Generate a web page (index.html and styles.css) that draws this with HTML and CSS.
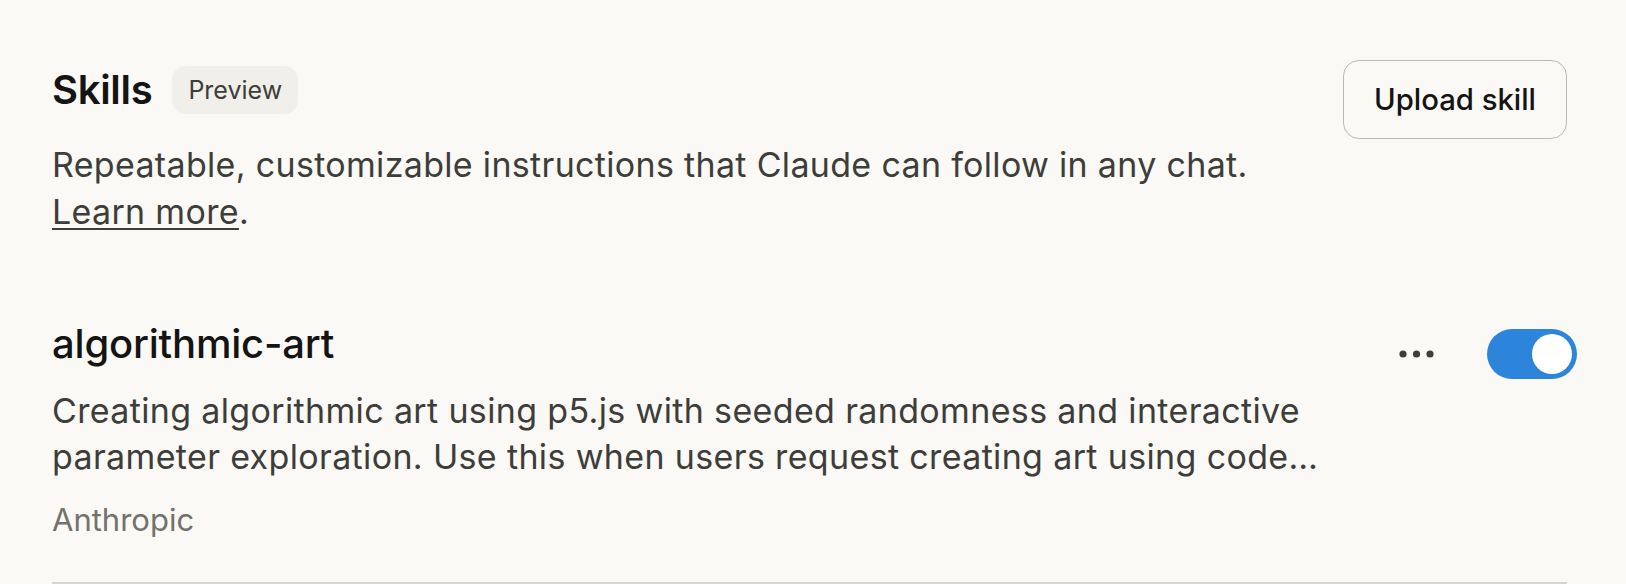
FILE: index.html
```html
<!DOCTYPE html>
<html lang="en">
<head>
<meta charset="utf-8">
<title>Skills</title>
<link rel="stylesheet" href="styles.css">
</head>
<body>
<main class="page">
  <header class="head">
    <div class="head-text">
      <div class="title-row">
        <h1 class="title">Skills</h1>
        <span class="badge">Preview</span>
      </div>
      <p class="desc">Repeatable, customizable instructions that Claude can follow in any chat.<br><a class="link" href="#">Learn more</a>.</p>
    </div>
    <button class="upload" type="button">Upload skill</button>
  </header>

  <section class="skill">
    <div class="skill-main">
      <h2 class="skill-name">algorithmic-art</h2>
      <p class="skill-desc">Creating algorithmic art using p5.js with seeded randomness and interactive<br>parameter exploration. Use this when users request creating art using code…</p>
      <p class="skill-author">Anthropic</p>
    </div>
    <div class="skill-actions">
      <button class="more" type="button" aria-label="More options">
        <svg width="36" height="8" viewBox="0 0 36 8" aria-hidden="true">
          <circle cx="4" cy="4" r="3.6"/>
          <circle cx="17.5" cy="4" r="3.6"/>
          <circle cx="31" cy="4" r="3.6"/>
        </svg>
      </button>
      <span class="toggle" role="switch" aria-checked="true"><span class="knob"></span></span>
    </div>
  </section>
</main>
</body>
</html>
```

FILE: styles.css
```css
* {
  box-sizing: border-box;
}

html, body {
  margin: 0;
  padding: 0;
  background: #faf9f5;
}

body {
  font-family: Inter, "Noto Sans", sans-serif;
  color: #141413;
}

.page {
  width: 1567px;
  padding: 60px 0 0 52px;
}

.head {
  display: flex;
  justify-content: space-between;
  align-items: flex-start;
}

.head-text {
  padding-top: 5.5px;
}

.title-row {
  display: flex;
  align-items: center;
  gap: 20px;
  height: 48px;
}

.title {
  margin: 0;
  font-size: 40px;
  line-height: 48px;
  font-weight: 600;
  color: #141413;
  letter-spacing: -0.3px;
}

.badge {
  display: inline-flex;
  align-items: center;
  height: 48px;
  padding: 0 16px;
  border-radius: 14px;
  background: #f0efe9;
  color: #3d3d3a;
  font-size: 25px;
  font-weight: 400;
}

.desc {
  margin: 27px 0 0;
  font-size: 34px;
  line-height: 47px;
  letter-spacing: 0.32px;
  color: #3d3d3a;
}

.link {
  color: inherit;
  text-decoration: underline;
  text-decoration-thickness: 2px;
  text-underline-offset: 4px;
}

.upload {
  height: 79px;
  padding: 0 30px;
  border: 1px solid #bcbab1;
  border-radius: 16px;
  background: transparent;
  font-family: Inter, "Noto Sans", sans-serif;
  font-size: 29.3px;
  font-weight: 500;
  color: #141413;
}

.skill {
  display: flex;
  justify-content: space-between;
  align-items: flex-start;
  margin-top: 85px;
  padding-bottom: 39.5px;
  border-bottom: 2px solid #d6d5cf;
}

.skill-name {
  margin: 0;
  font-size: 40px;
  line-height: 48px;
  font-weight: 500;
  color: #141413;
  letter-spacing: -0.2px;
}

.skill-desc {
  margin: 20.5px 0 0;
  font-size: 34px;
  line-height: 46px;
  letter-spacing: 0.35px;
  color: #3d3d3a;
}

.skill-author {
  margin: 16.5px 0 0;
  font-size: 31px;
  line-height: 46px;
  color: #73726c;
}

.skill-actions {
  display: flex;
  align-items: center;
  gap: 50px;
  margin-top: 9.5px;
  margin-right: -10px;
}

.more {
  display: flex;
  align-items: center;
  justify-content: center;
  width: 40px;
  height: 50px;
  padding: 0;
  border: 0;
  background: transparent;
  fill: #3d3d3a;
}

.toggle {
  display: flex;
  align-items: center;
  justify-content: flex-end;
  width: 90px;
  height: 50px;
  padding: 5px;
  border-radius: 25px;
  background: #2c84db;
}

.knob {
  width: 40px;
  height: 40px;
  border-radius: 50%;
  background: #ffffff;
}
```
